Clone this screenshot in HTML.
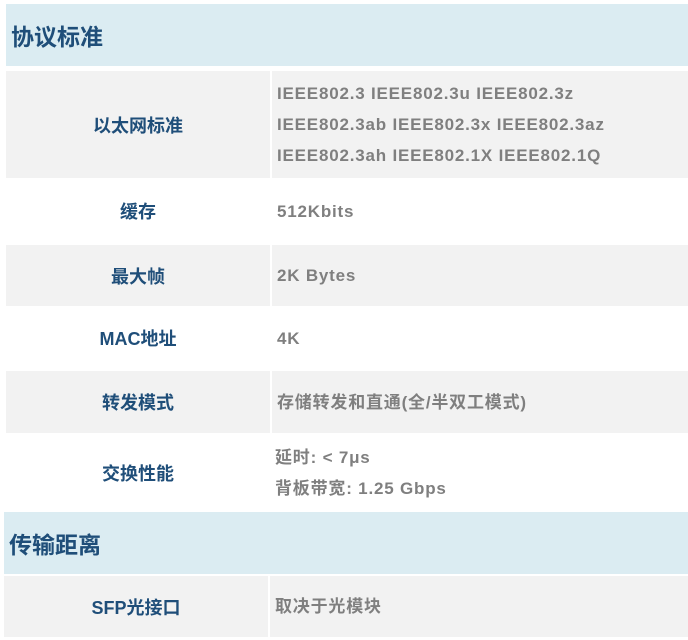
<!DOCTYPE html>
<html><head><meta charset="utf-8"><style>
body{margin:0;width:688px;height:640px;background:#fff;font-family:"Liberation Sans","Noto Sans CJK SC",sans-serif;font-weight:bold;position:relative;overflow:hidden}
div{position:absolute;box-sizing:border-box}
.h{background:#dbecf2;color:#1f4e79;font-size:23px;padding-left:5px;display:flex;align-items:center}
.g{background:#f2f2f2}
.l{color:#1f4e79;font-size:18px;display:flex;align-items:center;justify-content:center}
.v{color:#7f7f7f;font-size:17px;letter-spacing:0.8px;display:flex;flex-direction:column;justify-content:center;padding-left:7px;line-height:31px}
</style></head><body>
<div class="h" style="left:6px;top:4px;width:682px;height:62px">协议标准</div>

<div class="g" style="left:6px;top:71px;width:264px;height:107px"></div>
<div class="g" style="left:272px;top:71px;width:416px;height:107px"></div>
<div class="l" style="left:6px;top:71px;width:264px;height:107px">以太网标准</div>
<div class="v" style="left:270px;top:71px;width:418px;height:107px"><span>IEEE802.3 IEEE802.3u IEEE802.3z</span><span>IEEE802.3ab IEEE802.3x IEEE802.3az</span><span>IEEE802.3ah IEEE802.1X IEEE802.1Q</span></div>

<div class="l" style="left:6px;top:178px;width:264px;height:66px">缓存</div>
<div class="v" style="left:270px;top:178px;width:418px;height:66px">512Kbits</div>

<div class="g" style="left:6px;top:245px;width:264px;height:61px"></div>
<div class="g" style="left:272px;top:245px;width:416px;height:61px"></div>
<div class="l" style="left:6px;top:245px;width:264px;height:61px">最大帧</div>
<div class="v" style="left:270px;top:245px;width:418px;height:61px">2K Bytes</div>

<div class="l" style="left:6px;top:306px;width:264px;height:64px">MAC地址</div>
<div class="v" style="left:270px;top:306px;width:418px;height:64px">4K</div>

<div class="g" style="left:6px;top:371px;width:264px;height:62px"></div>
<div class="g" style="left:272px;top:371px;width:416px;height:62px"></div>
<div class="l" style="left:6px;top:371px;width:264px;height:62px">转发模式</div>
<div class="v" style="left:270px;top:371px;width:418px;height:62px">存储转发和直通(全/半双工模式)</div>

<div class="l" style="left:6px;top:434px;width:264px;height:78px">交换性能</div>
<div class="v" style="left:268px;top:434px;width:420px;height:78px"><span>延时: &lt; 7μs</span><span>背板带宽: 1.25 Gbps</span></div>

<div class="h" style="left:4px;top:512px;width:684px;height:62px">传输距离</div>

<div class="g" style="left:4px;top:576px;width:264px;height:61px"></div>
<div class="g" style="left:270px;top:576px;width:418px;height:61px"></div>
<div class="l" style="left:4px;top:576px;width:264px;height:61px">SFP光接口</div>
<div class="v" style="left:268px;top:576px;width:420px;height:61px">取决于光模块</div>
</body></html>
